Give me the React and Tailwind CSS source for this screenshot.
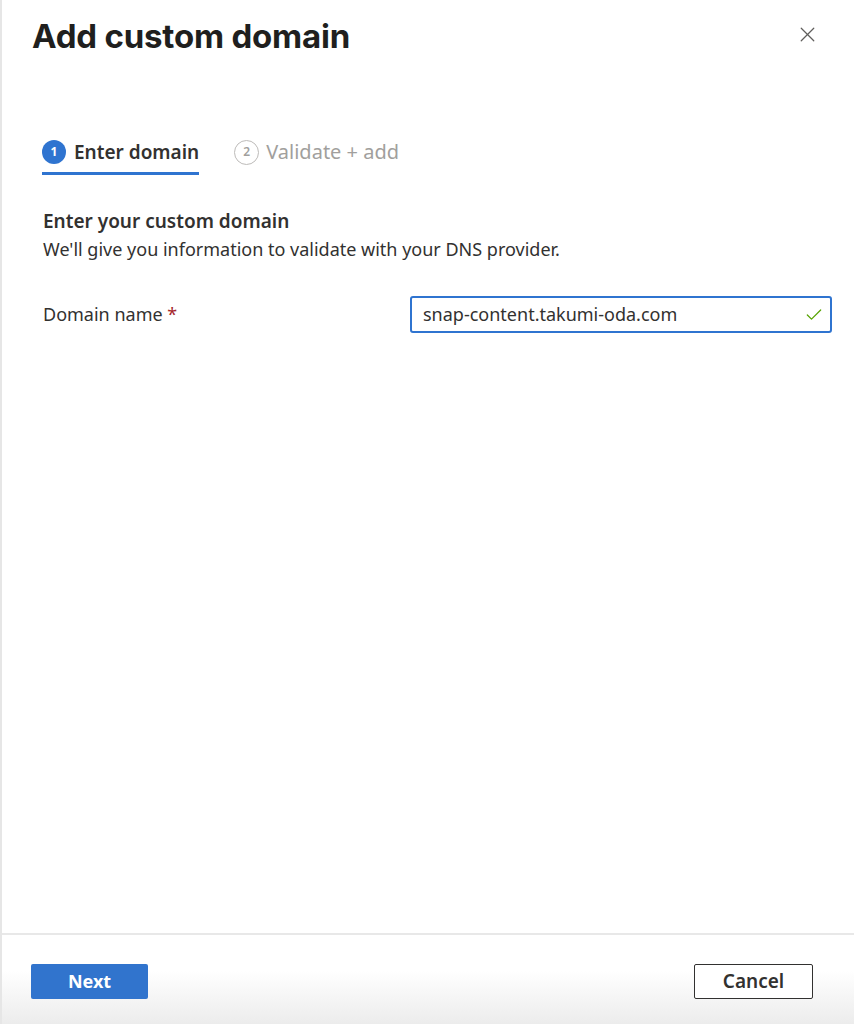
import { X, Check } from "lucide-react";

const App = () => {
  return (
    <div className="w-[854px] h-[1024px] bg-white flex flex-col border-l-2 border-[#e6e6e6] font-['Noto_Sans',sans-serif] text-[#323130] overflow-hidden">
      {/* Header */}
      <div className="flex items-start justify-between pl-[30px] pr-[34px] pt-[14px]">
        <h1 className="text-[33px] leading-[44px] font-bold tracking-[-0.2px] text-[#201f1e] font-['Inter',sans-serif]">
          Add custom domain
        </h1>
        <button className="mt-[8px] text-[#605e5c]">
          <X className="w-[25px] h-[25px]" strokeWidth={1.2} />
        </button>
      </div>

      {/* Steps */}
      <div className="flex items-end gap-[35px] pl-[40px] mt-[74px] h-[43px]">
        <div className="flex flex-col">
          <div className="flex items-center gap-[8px] pb-[7px]">
            <span className="w-[24px] h-[24px] rounded-full bg-[#2f74d0] text-white text-[12px] font-bold flex items-center justify-center">
              1
            </span>
            <span className="text-[19px] font-semibold leading-[26px]">Enter domain</span>
          </div>
          <div className="h-[3px] bg-[#2f74d0]" />
        </div>
        <div className="flex items-center gap-[7px] pb-[10px] text-[#a19f9d]">
          <span className="w-[25px] h-[25px] rounded-full border-[1.5px] border-[#bdbbb9] text-[12px] font-semibold flex items-center justify-center">
            2
          </span>
          <span className="text-[20px] leading-[26px]">Validate + add</span>
        </div>
      </div>

      {/* Section */}
      <div className="pl-[41px] mt-[32px]">
        <h2 className="text-[19px] font-semibold leading-[28px]">Enter your custom domain</h2>
        <p className="text-[18px] leading-[28px]">
          We'll give you information to validate with your DNS provider.
        </p>
      </div>

      <div className="flex items-center pl-[41px] pr-[22px] mt-[33px]">
        <label className="w-[367px] text-[18px]">
          Domain name <span className="text-[#a4262c]">*</span>
        </label>
        <div className="flex-1 h-[37px] border-2 border-[#2f74d0] rounded-[3px] flex items-center justify-between pl-[11px] pr-[6px]">
          <span className="text-[18px]">snap-content.takumi-oda.com</span>
          <Check className="w-[20px] h-[20px] text-[#57a300]" strokeWidth={1.5} />
        </div>
      </div>

      <div className="flex-1" />

      {/* Footer */}
      <div className="border-t-2 border-[#e8e8e8] h-[91px] bg-gradient-to-b from-white from-40% to-[#ececec] flex items-start justify-between pl-[29px] pr-[41px] pt-[29px]">
        <button className="w-[117px] h-[35px] rounded-[2px] bg-[#3174cd] text-white text-[18px] font-bold">
          Next
        </button>
        <button className="w-[119px] h-[35px] rounded-[2px] border-[1.5px] border-[#323130] bg-white text-[19px] font-semibold">
          Cancel
        </button>
      </div>
    </div>
  );
};

export default App;
